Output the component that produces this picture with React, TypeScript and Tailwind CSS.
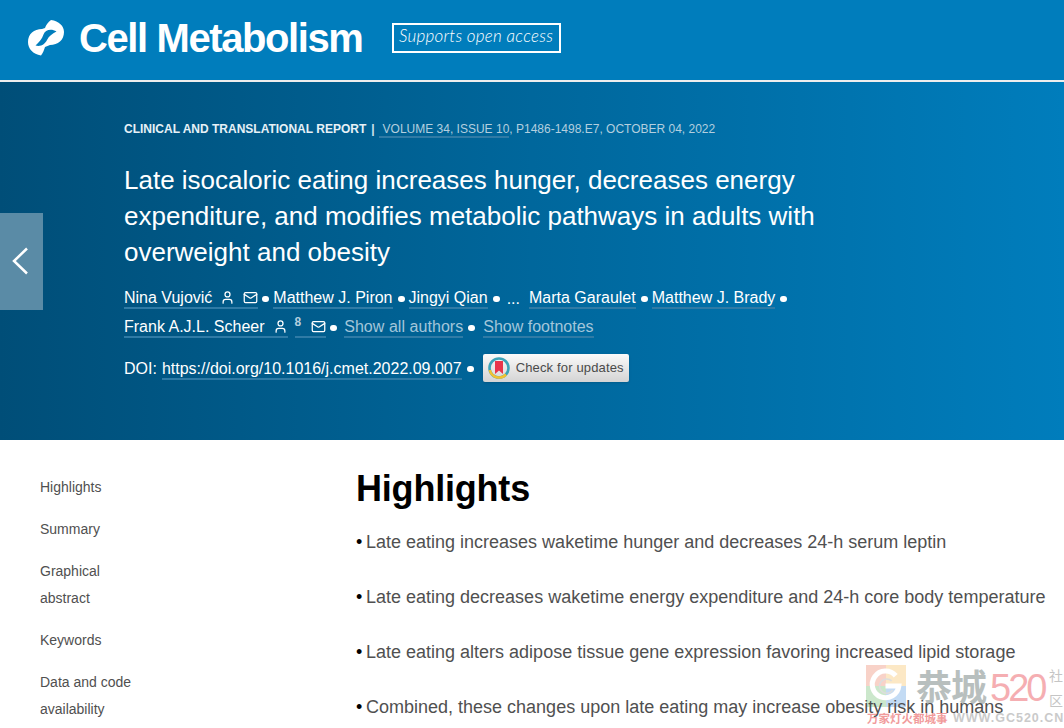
import { Mail, User } from 'lucide-react';

const font = { fontFamily: '"Liberation Sans", Arial, sans-serif' };
const cjk = { fontFamily: '"Noto Sans CJK SC", sans-serif' };

const highlights = [
    'Late eating increases waketime hunger and decreases 24-h serum leptin',
    'Late eating decreases waketime energy expenditure and 24-h core body temperature',
    'Late eating alters adipose tissue gene expression favoring increased lipid storage',
    'Combined, these changes upon late eating may increase obesity risk in humans',
];

const navItems = [['Highlights'], ['Summary'], ['Graphical', 'abstract'], ['Keywords'], ['Data and code', 'availability']];

function Dot({ className }: { className: string }) {
    return <span className={`inline-block h-[6px] w-[7px] shrink-0 rounded-full bg-white ${className}`} />;
}

function AuthorLink({ children }: { children: React.ReactNode }) {
    return <span className="inline-flex h-[21px] items-center border-b-2 border-[#2f7ba6] leading-[19px] text-white">{children}</span>;
}

function Watermark() {
    return (
        <div className="pointer-events-none absolute left-[866px] top-[665px] h-[60px] w-[198px] opacity-60">
            <div className="absolute left-0 top-0 grid h-[42px] w-[40px] grid-cols-2 grid-rows-2">
                <div className="bg-[#f5b5a5]" />
                <div className="bg-[#fbd9a0]" />
                <div className="bg-[#a9d8a9]" />
                <div className="bg-[#9cc4ee]" />
            </div>
            <svg width="40" height="42" viewBox="0 0 39 40" className="absolute left-0 top-0">
                <path d="M29 10 A13 13 0 1 0 32 20 H19" fill="none" stroke="#fff" strokeWidth="5" />
                <path d="M25 15 A7 7 0 1 0 26 24" fill="none" stroke="#c8c8c8" strokeWidth="1.5" />
            </svg>
            <div className="absolute left-[50px] top-[-5px] text-[36px] font-bold leading-[50px] tracking-[-1px] text-[#8a9694]" style={cjk}>恭城</div>
            <div className="absolute left-[124px] top-[4px] text-[38px] leading-[38px] tracking-[-3px] text-[#f07a80]">520</div>
            <div className="absolute left-[183px] top-[-2px] text-[14px] leading-[25px] text-[#a0a0a0]" style={cjk}>社<br />区</div>
            <div className="absolute left-[1px] top-[46px] text-[11.5px] font-bold leading-[14px] text-[#e85a5a]" style={cjk}>万家灯火都城事</div>
            <div className="absolute left-[87px] top-[46px] text-[12.5px] font-bold leading-[14px] tracking-[1px] text-[#a8a8a8]">WWW.GC520.CN</div>
        </div>
    );
}

export default function App() {
    return (
        <div className="relative h-[728px] w-[1064px] overflow-hidden bg-white" style={font}>
            <header className="flex h-[80px] items-center bg-[#007dbc] pb-[5px] pl-[28px]">
                <svg width="36" height="36" viewBox="0 0 36 36">
                    <path
                        fillRule="evenodd"
                        d="M23 0 C31 1 36 6 36 12 C36 20 30 25 22 25 L17 27 C16 30 15 33 13 35.5 C5 34 0 29 0 22 C0 14 6 9 14 9 L17 8 C18 5 20 2 23 0 Z M7.5 25.5 C13 27 17 24 19 20 C21 16 24 14 28.5 11.5 C23 8 17 10 15.5 14.5 C14 19 11 22 7.5 25.5 Z"
                        fill="#fff"
                    />
                </svg>
                <span className="ml-[15px] text-[40px] font-bold leading-none tracking-[-1.4px] text-white">Cell Metabolism</span>
                <span className="ml-[29px] flex h-[30px] w-[169px] items-center justify-center border-2 border-white pb-[3px] text-[17px] font-light italic tracking-[0.25px] text-white" style={{ fontFamily: 'Lato, sans-serif' }}>
                    Supports open access
                </span>
            </header>
            <div className="h-[2px] bg-[#eeeeee]" />
            <section className="relative h-[358px] bg-gradient-to-r from-[#004e78] via-[#00679c] to-[#007dbc] pl-[124px] pt-[39px]">
                <div className="flex h-[16px] items-center text-[12px] leading-[16px]">
                    <span className="font-bold text-[#e6f1f7]">CLINICAL AND TRANSLATIONAL REPORT</span>
                    <span className="mx-[5px] font-bold text-[#cfe2ee]">|</span>
                    <span className="ml-[-1px] text-[#b3cfdf]">
                        <span className="border-b-2 border-[#2f7ba6] pl-[4px]">VOLUME 34, ISSUE 10</span>, P1486-1498.E7, OCTOBER 04, 2022
                    </span>
                </div>
                <h1 className="mt-[25px] w-[720px] text-[26px] font-normal leading-[36px] text-white">
                    Late isocaloric eating increases hunger, decreases energy expenditure, and modifies metabolic pathways in adults with overweight and obesity
                </h1>
                <div className="mt-[14px] flex h-[29px] items-center text-[16px] text-white">
                    <AuthorLink>Nina Vujović <User size={15} className="ml-[8px]" /> <Mail size={15} className="ml-[8px]" /></AuthorLink>
                    <Dot className="ml-[4px] mr-[4px]" />
                    <AuthorLink>Matthew J. Piron</AuthorLink>
                    <Dot className="ml-[5px] mr-[4px]" />
                    <AuthorLink>Jingyi Qian</AuthorLink>
                    <Dot className="ml-[5px]" />
                    <span className="ml-[7px]">...</span>
                    <span className="ml-[9px] flex"><AuthorLink>Marta Garaulet</AuthorLink></span>
                    <Dot className="ml-[5px] mr-[4px]" />
                    <AuthorLink>Matthew J. Brady</AuthorLink>
                    <Dot className="ml-[5px]" />
                </div>
                <div className="flex h-[29px] items-center text-[16px] text-white">
                    <AuthorLink>Frank A.J.L. Scheer <User size={15} className="ml-[8px]" /></AuthorLink>
                    <span className="ml-[7px] h-[21px] border-b-2 border-[#2f7ba6] pr-[3px] text-[12px] font-bold leading-[10px] text-[#b3cfdf]">8</span>
                    <AuthorLink><Mail size={15} className="ml-[7px]" /></AuthorLink>
                    <Dot className="ml-[4px] mr-[7px]" />
                    <span className="h-[21px] border-b-2 border-[#2f7ba6] leading-[19px] tracking-[0.05px] text-[#a3c6da]">Show all authors</span>
                    <Dot className="ml-[5px] mr-[8px]" />
                    <span className="h-[21px] border-b-2 border-[#2f7ba6] leading-[19px] text-[#a3c6da]">Show footnotes</span>
                </div>
                <div className="mt-[13px] flex h-[28px] items-center text-[16px] text-white">
                    <span>DOI:</span>
                    <span className="ml-[5px] flex"><AuthorLink>https://doi.org/10.1016/j.cmet.2022.09.007</AuthorLink></span>
                    <Dot className="ml-[5px]" />
                    <span className="mb-[2px] ml-[9px] flex h-[28px] w-[146px] items-center rounded-[2px] bg-gradient-to-b from-[#fafafa] to-[#d4d4d4] pl-[4px] shadow-sm">
                        <svg width="24" height="24" viewBox="0 0 24 24">
                            <circle cx="12" cy="12" r="9.5" fill="none" stroke="#3ba3b8" strokeWidth="2.6" />
                            <path d="M2.8 14 A9.5 9.5 0 0 0 19 18.5" fill="none" stroke="#f2c230" strokeWidth="2.6" />
                            <path d="M8 5 H16 V18 L12 14.5 L8 18 Z" fill="#e8354a" />
                        </svg>
                        <span className="ml-[5px] text-[13px] font-normal leading-[24px] tracking-[0.15px] text-[#4a4a4a]">Check for updates</span>
                    </span>
                </div>
                <button className="absolute left-0 top-[131px] flex h-[97px] w-[43px] items-center bg-[#5a8ba6] pb-[2px] pl-[12px]">
                    <svg width="16" height="28" viewBox="0 0 16 28">
                        <polyline points="15,1.5 2,14 15,26.5" fill="none" stroke="#fff" strokeWidth="2.5" />
                    </svg>
                </button>
            </section>
            <Watermark />
            <main className="relative flex">
                <nav className="w-[356px] shrink-0 pl-[40px] pt-[34px] text-[14px] leading-[27px] text-[#505050]">
                    {navItems.map(lines => (
                        <div key={lines[0]} className="mb-[15px]">
                            {lines.map(line => <div key={line}>{line}</div>)}
                        </div>
                    ))}
                </nav>
                <div className="pt-[27px]">
                    <h2 className="text-[36px] font-bold leading-[44px] tracking-[-0.2px] text-black">Highlights</h2>
                    <ul className="mt-[21px]">
                        {highlights.map(item => (
                            <li key={item} className="mb-[34px] flex whitespace-nowrap text-[18px] leading-[21px] text-[#505050]">
                                <span className="w-[10px] text-black">•</span>
                                <span>{item}</span>
                            </li>
                        ))}
                    </ul>
                </div>
            </main>
        </div>
    );
}
